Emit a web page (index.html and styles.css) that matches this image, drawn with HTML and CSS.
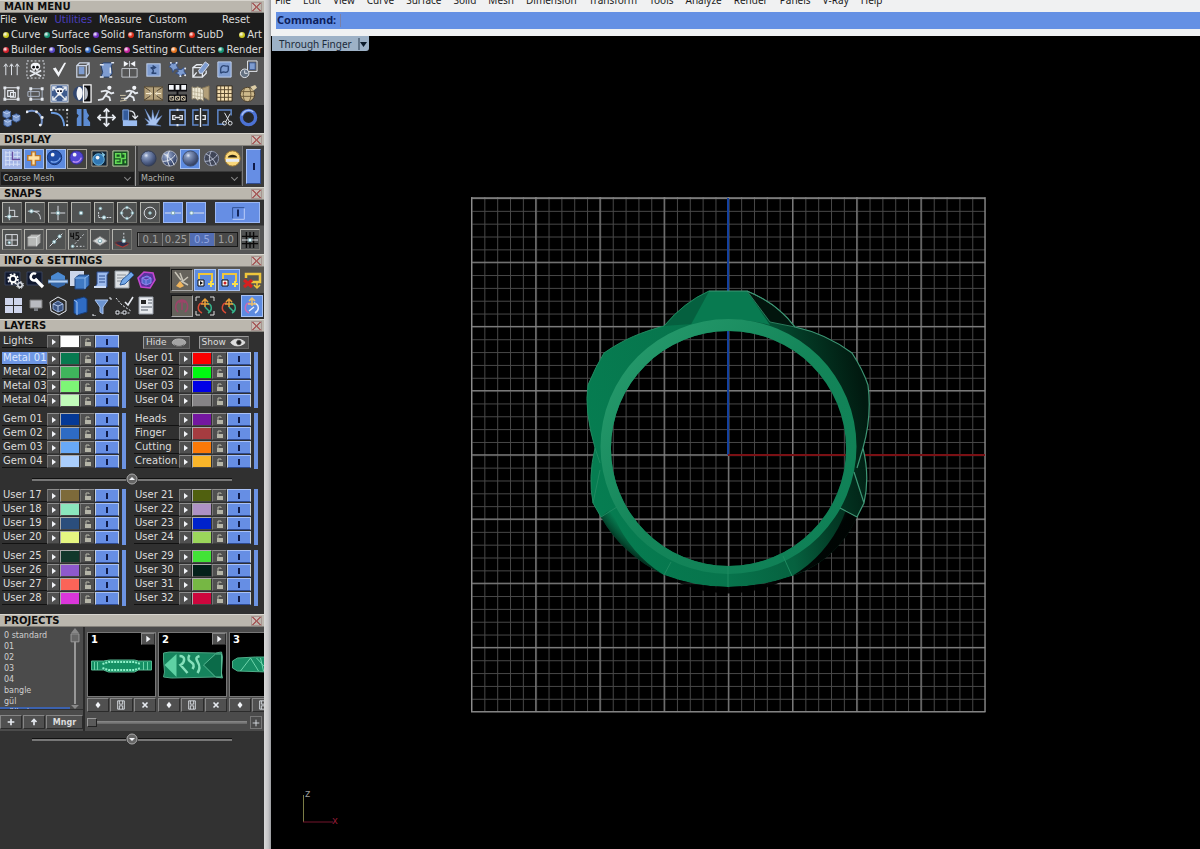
FILE: index.html
```html
<!DOCTYPE html>
<html lang="en">
<head>
<meta charset="utf-8">
<title>Through Finger</title>
<link rel="stylesheet" href="styles.css">
</head>
<body>
<div class="app">
<aside class="side">

  <section class="panel">
    <header class="bar"><h2>MAIN MENU</h2><button class="close" aria-label="Close main menu"></button></header>
    <nav class="menu"><a href="#">File</a><a href="#">View</a><a href="#" class="current">Utilities</a><a href="#">Measure</a><a href="#">Custom</a><a href="#" class="end">Reset</a></nav>
    <nav class="tabs"><a href="#" class="yellow">Curve</a><a href="#" class="teal">Surface</a><a href="#" class="violet">Solid</a><a href="#" class="red">Transform</a><a href="#" class="red">SubD</a><a href="#" class="yellow end">Art</a></nav>
    <nav class="tabs spread"><a href="#" class="crimson">Builder</a><a href="#" class="indigo">Tools</a><a href="#" class="blue">Gems</a><a href="#" class="magenta">Setting</a><a href="#" class="orange">Cutters</a><a href="#" class="teal">Render</a></nav>
    <div class="tools">
      <button aria-label="Extrude"><svg viewBox="0 0 20 20"><path d="M4 16V5M10 16V5M16 16V5M2 7l2-3 2 3M8 7l2-3 2 3M14 7l2-3 2 3"/></svg></button>
      <button aria-label="Delete marked"><svg viewBox="0 0 20 20"><rect x="1" y="1" width="18" height="18" stroke-dasharray="2 2"/><path d="M4 11l12 6M16 11L4 17" stroke-width="1.800"/><path class="fw n" d="M10 3c-4 0-5 2-5 4s1 2 2 3v2h6v-2c1-1 2-1 2-3s-1-4-5-4z"/><circle class="fk n" cx="8" cy="7.500" r="1.400"/><circle class="fk n" cx="12" cy="7.500" r="1.400"/><path d="M10 10v2M8.500 11v1M11.500 11v1" stroke="#333"/></svg></button>
      <button aria-label="Accept"><svg viewBox="0 0 20 20"><path class="fw n" d="M3 9l3-1 3 5 6-10h2L9 18z"/></svg></button>
      <button aria-label="Box"><svg viewBox="0 0 20 20"><path class="fb n" d="M6 7h6v8H6z"/><path d="M4 6h10v12H4zM4 6l3-3h10v11l-3 4M14 6l3-3" stroke-width="1.300" stroke="#cdd6e6"/></svg></button>
      <button aria-label="Cage edit"><svg viewBox="0 0 20 20"><path class="fb" d="M4 5l3-2h10l-2 3 1 8-3 4H4l2-5z" stroke="#243c66"/><path d="M3 5h4M3 18h4M13 18h3M15 3h3M14 8v6" stroke-width="1.600"/></svg></button>
      <button aria-label="Align"><svg viewBox="0 0 20 20"><path d="M2 9h16v9H2zM10 9v9M10 1v6" stroke="#c3c6cc"/><path class="fw n" d="M4 1l5 3-5 3zM16 1l-5 3 5 3z"/></svg></button>
      <button aria-label="Rotate piece"><svg viewBox="0 0 20 20"><rect class="fb" x="3" y="4" width="14" height="13" stroke="#c2d2ee"/><path d="M13 14H8c3-1 2-5-1-6h4M9 6l3 2-3 2" stroke="#2c4675" stroke-width="1.500"/></svg></button>
      <button aria-label="Explode"><svg viewBox="0 0 20 20"><path class="fb" stroke="#354e83" d="M2 3l4 1 4-2-1 4 2 3-4 1-2 3-1-4-3-2 2-2zM10 10l4 0 3-2 0 4 2 3-4 0-2 3-2-3-3-1 3-2z"/><path d="M3 3h.1M9 3h.1M18 9h.1M13 17h.1M18 16h.1" stroke-width="2" stroke-linecap="round"/></svg></button>
      <button aria-label="Edit box"><svg viewBox="0 0 20 20"><path d="M2 8h10v10H2zM2 8l4-3h6M12 18l4-4v-3M2 18l4-5" stroke-width="1.400"/><path class="fb" d="M8 11l1 3 3 0 7-9-4-3z" stroke="#d5def0"/></svg></button>
      <button aria-label="Sweep"><svg viewBox="0 0 20 20"><path class="fb" d="M3 2h14v16H3z" stroke="#c2d2ee"/><path d="M6 9c2-6 5-1 8-3M6 14c3-4 6 2 8-3M6 9v5M14 6v5" stroke="#2c4675" stroke-width="1.400"/></svg></button>
      <button aria-label="History"><svg viewBox="0 0 20 20"><path d="M9 1h10v11H9z"/><path class="fb" d="M11 3h6v7h-6z" stroke="#3f5c95"/><circle cx="6" cy="14" r="4.500" fill="#637080"/><path d="M6 11v3h3"/></svg></button>

      <button aria-label="Group"><svg viewBox="0 0 20 20"><path d="M3 4h14v12H3zM6 7h6v6H6zM9 9h5v5H9z" stroke-width="1.200"/><path stroke-width="3" d="M1.500 4h3M15.500 4h3M1.500 16h3M15.500 16h3"/></svg></button>
      <button aria-label="Ungroup"><svg viewBox="0 0 20 20"><path d="M5 5h12v11H5zM2 8h12v5H2z" stroke="#adb7c8"/><path stroke-width="3" d="M3.500 5h3M15.500 5h3M3.500 16h3M15.500 16h3"/></svg></button>
      <button aria-label="Purge"><svg viewBox="0 0 20 20"><rect x="1" y="1" width="18" height="18" fill="#3e5b8e"/><path d="M3 3l14 14M17 3L3 17M3 7V3h4M13 3h4v4M3 13v4h4M13 17h4v-4" stroke-width="1.500"/><path class="fw n" d="M10 4c-3 0-4 1-4 3s1 2 2 3v2h4v-2c1-1 2-1 2-3s-1-3-4-3z"/><path d="M7.500 7.500h2M10.500 7.500h2" stroke="#223" stroke-width="2"/></svg></button>
      <button aria-label="Shade"><svg viewBox="0 0 20 20"><circle fill="#30456e" class="n" cx="8" cy="10" r="8"/><path class="fw n" d="M6 3c-3 4-3 10 0 14 5 0 6-14 0-14z"/><path class="fk" d="M11 1h8v18h-8z" stroke="#fff" stroke-width="1.300"/><path fill="#b7bdc8" class="n" d="M12 3c5 1 5 13 0 14z"/></svg></button>
      <button aria-label="Run"><svg viewBox="0 0 20 20"><circle class="fw n" cx="13" cy="4" r="2.200"/><path d="M12 7l-3 5 4 2 1 4M9 12l-3 4-5 1M4 8l5-1 3 1 3 2 3-1" stroke-width="2"/></svg></button>
      <button aria-label="Run fast"><svg viewBox="0 0 20 20"><circle class="fw n" cx="15" cy="4" r="2.200"/><path d="M13 7l-3 5 4 2 1 4M10 12l-3 3-3 1M6 8l4-1 4 1 2 2 3-1" stroke-width="2"/><path d="M0 12h6M0 18l7-1M1 15h4" stroke="#d3c8ac"/></svg></button>
      <button aria-label="Squeeze"><svg viewBox="0 0 20 20"><path class="ft" d="M0 3h20v14H0z" stroke="#5a4c37"/><path d="M0 3l6 4v6l-6 4M20 3l-6 4v6l6 4M10 3v14" stroke="#4c402f"/><path d="M2 10h5M18 10h-5M5 8l3 2-3 2M15 8l-3 2 3 2" stroke="#fff4d8"/></svg></button>
      <button aria-label="Array"><svg viewBox="0 0 20 20"><path class="fk n" d="M0 0h20v8H0zM0 11h20v8H0zM9 8h2v3H9z"/><path class="fw n" d="M1 1h5v5H1zM8 1h4v5H8zM14 1h5v5h-5z"/><path d="M2 13h4v4H2zM8 13h4v4H8zM14 13h4v4h-4zM2 13l4 4M8 13l4 4M14 13l4 4" stroke="#d9cdb2"/></svg></button>
      <button aria-label="Unfold"><svg viewBox="0 0 20 20"><path class="ft" d="M10 5l9-3v15l-9-5z" stroke="#8a7a5a"/><path d="M1 3l3 1 3-1 3 1 3 2v12l-3-2-3 1-3-2-3 1z" fill="#ece6d2" stroke="#8b8168"/><path d="M4 4v12M7 3v13M10 4v12M1 8l12 2M1 12l12 2" stroke="#a89e82" stroke-width=".6"/></svg></button>
      <button aria-label="Tile"><svg viewBox="0 0 20 20"><path d="M2 2h16v16H2z" fill="#f2dcae" stroke="#2c251a"/><path d="M6 2v16M10 2v16M14 2v16M2 6h16M2 10h16M2 14h16" stroke="#54452c"/></svg></button>
      <button aria-label="Wrap"><svg viewBox="0 0 20 20"><circle fill="#cdb98b" cx="9" cy="11" r="7.500" stroke="#4a3e2b"/><path d="M2 8h14M2 13h14M6 4c-2 4-2 10 0 14M11 4c2 4 2 10 0 14" stroke="#6d5c3c"/><path class="fw n" d="M12 3l5-2 2 3-4 3z" style="fill:#dccda6"/></svg></button>
    </div>
    <div class="tools dark">
      <button aria-label="Boxes"><svg viewBox="0 0 20 20"><path class="fb" stroke="#35558f" d="M1 4l4-2 4 2v5l-4 2-4-2zM2 13l4-2 4 2v5l-4 2-4-2zM11 8l4-2 4 2v5l-4 2-4-2z"/><path stroke="#bdd0f2" d="M1 4l4 2 4-2M2 13l4 2 4-2M11 8l4 2 4-2"/></svg></button>
      <button aria-label="Arc"><svg viewBox="0 0 20 20"><path d="M1 4c10-4 18 4 15 14" stroke="#7492c8" stroke-width="2"/><path d="M1 4h.1M11 4h.1M17 10h.1M15 18h.1" stroke-width="3" stroke-linecap="round"/></svg></button>
      <button aria-label="Conic"><svg viewBox="0 0 20 20"><path d="M1 2h17v17" stroke-dasharray="2 2"/><path d="M1 5c9 0 13 4 14 14" stroke="#6b9ce0" stroke-width="2"/><path d="M18 2h.1M18 18h.1M1 2h.1" stroke-width="2.500" stroke-linecap="round"/></svg></button>
      <button aria-label="Mirror"><svg viewBox="0 0 20 20"><path class="n" d="M9 1H4v5l2 2-2 3v8h5zM11 1h3l1 4 2 3-2 3 3 4v4h-7z" fill="#5c8bd2"/></svg></button>
      <button aria-label="Move"><svg viewBox="0 0 20 20"><path d="M10 1v18M1 10h18M7 4l3-3 3 3M7 16l3 3 3-3M4 7l-3 3 3 3M16 7l3 3-3 3" stroke-width="1.800"/></svg></button>
      <button aria-label="Rotate"><svg viewBox="0 0 20 20"><path d="M3 2h6v11H3z" fill="#335b9c" stroke="#7fa4e2"/><path fill="#9bbcf0" class="n" d="M3 13h15v6H3z"/><path d="M10 3c4 0 6 2 6 7M13 8l3 3 3-3" stroke-width="1.400"/></svg></button>
      <button aria-label="Burst"><svg viewBox="0 0 20 20"><path d="M1 1l7 11L9 2l2 9 5-9-3 10 6-4-6 9 5 2-16-1 3-2-4-5 5 3z" fill="#a8c3f0" stroke="#5a7fbe" stroke-width=".5"/></svg></button>
      <button aria-label="Join"><svg viewBox="0 0 20 20"><path d="M2 2h16v16H2z" stroke="#81a7e6" stroke-width="1.600"/><path d="M8 8H5v4h3M12 8h3v4h-3M7 10h6" stroke-width="1.400"/><path d="M9 2h2M9 18h2" stroke-width="2.500"/></svg></button>
      <button aria-label="Split"><svg viewBox="0 0 20 20"><path d="M8 2H2v16h6M12 2h6v16h-6" stroke="#5f87c9" stroke-width="1.600"/><path d="M10 0v20M8 8H5v4h3M12 8h3v4h-3" stroke-width="1.400"/></svg></button>
      <button aria-label="Trim"><svg viewBox="0 0 20 20"><path d="M17 8V2H3v15h7" stroke="#5f87c9" stroke-width="1.600"/><path d="M10 5l5 9M16 6l-5 9"/><circle cx="10" cy="16" r="2"/><circle cx="16" cy="16" r="2"/></svg></button>
      <button aria-label="Ring"><svg viewBox="0 0 20 20"><circle cx="10" cy="10" r="7.500" stroke="#4c72d4" stroke-width="3.500"/><path d="M3 8a7.500 7.500 0 0 1 12-4" stroke="#a7c0f5" stroke-width="1.500"/></svg></button>
    </div>
  </section>

  <section class="panel">
    <header class="bar"><h2>DISPLAY</h2><button class="close" aria-label="Close display"></button></header>
    <div class="display">
      <div class="view-box">
        <div class="icons">
          <button class="lit pale" aria-label="Grid"><svg viewBox="0 0 20 20"><path d="M3 2v16M7 2v16M11 2v16M15 2v16M2 4h16M2 8h16M2 12h16M2 16h16" stroke="#d6e0f7"/><path d="M10 3v8h8" stroke="#654a9d" stroke-width="1.500"/></svg></button>
          <button class="lit" aria-label="Axes"><svg viewBox="0 0 20 20"><path d="M8 3h4v4h5v5h-5v5H8v-5H4V7h4z" fill="#ffe3a6" stroke="#b8742b" stroke-width="1.500"/></svg></button>
          <button class="lit" aria-label="Shaded sphere"><svg viewBox="0 0 20 20"><circle cx="9" cy="9" r="7.500" fill="#204da6" stroke="#142e6a"/><circle class="fw n" cx="7" cy="6" r="2"/><path d="M5 13c4 2 9 0 10-4" stroke="#78a4ec" stroke-width="1.500"/></svg></button>
          <button class="boxed" aria-label="Rendered sphere"><svg viewBox="0 0 20 20"><circle cx="9" cy="9" r="7" fill="#5147d2" stroke="#382d91"/><circle class="fw n" cx="7" cy="6" r="2"/><path d="M5 13c4 2 8 0 9-4" stroke="#bd8cf1" stroke-width="1.500"/></svg></button>
          <button aria-label="Environment"><svg viewBox="0 0 20 20"><path d="M2 2h16v16H2z" fill="#102437" stroke="#afa698"/><circle cx="9" cy="11" r="6" fill="#3178b4" stroke="#71bde4"/><circle class="fw n" cx="8" cy="9" r="2"/><path d="M12 3l4 3-2 3z" fill="#8acbe8" class="n"/></svg></button>
          <button aria-label="Circuit"><svg viewBox="0 0 20 20"><path d="M2 2h16v16H2z" fill="#174f22" stroke="#c5d6b0"/><path d="M5 5h5v4H5zM12 5h3v5h-4v5H5v-3h4M15 12v3" stroke="#64db55" stroke-width="1.700"/></svg></button>
        </div>
        <label class="pick"><select aria-label="Mesh density"><option>Coarse Mesh</option><option>Fine Mesh</option></select></label>
      </div>
      <div class="mode-box">
        <div class="icons">
          <button aria-label="Matte"><svg viewBox="0 0 20 20"><circle cx="10" cy="10" r="8" fill="url(#ball)" stroke="#333c53"/></svg></button>
          <button aria-label="Wire front"><svg viewBox="0 0 20 20"><circle cx="10" cy="10" r="8" fill="url(#ball)" stroke="#aab0c0"/><path d="M4 5c4 2 9 6 11 12M10 2c-3 5-3 10 0 16M3 13c5 0 10-2 13-7"/></svg></button>
          <button class="lit" aria-label="Gloss"><svg viewBox="0 0 20 20"><circle cx="10" cy="10" r="8" fill="url(#ball)" stroke="#3d4c6a"/></svg></button>
          <button aria-label="Wire"><svg viewBox="0 0 20 20"><circle cx="10" cy="10" r="7.500" fill="#3f4557" stroke="#8b93ac"/><path d="M4 5c4 2 9 6 11 12M10 2c-3 5-3 10 0 16M3 13c5 0 10-2 13-7" stroke="#bcc2d4"/></svg></button>
          <button aria-label="Sun"><svg viewBox="0 0 20 20"><circle cx="10" cy="10" r="8" fill="#f9d77a" stroke="#a88134"/><path d="M5 9h10c-1-4-9-4-10 0z" fill="#2c2411" class="n"/><path d="M3 12h14" stroke-width="3"/></svg></button>
        </div>
        <label class="pick"><select aria-label="Render mode"><option>Machine</option><option>Quality</option></select></label>
      </div>
      <button class="switch tall" aria-label="Display on"></button>
    </div>
  </section>

  <section class="panel">
    <header class="bar"><h2>SNAPS</h2><button class="close" aria-label="Close snaps"></button></header>
    <div class="snaps">
      <div class="snap-row">
        <button class="cell" aria-label="End"><svg viewBox="0 0 20 20"><path d="M7 3v15M2 14h15M7 7h6v7"/><circle class="pt" cx="7" cy="14" r="2"/></svg></button>
        <button class="cell" aria-label="Near"><svg viewBox="0 0 20 20"><path d="M2 8h13M7 8c7 1 9 4 9 9"/><circle class="pt" cx="6" cy="8" r="2"/></svg></button>
        <button class="cell" aria-label="Intersection"><svg viewBox="0 0 20 20"><path d="M10 2v16M2 10h16"/><circle class="pt" cx="10" cy="10" r="2"/></svg></button>
        <button class="cell" aria-label="Point"><svg viewBox="0 0 20 20"><circle class="pt" cx="10" cy="10" r="2"/></svg></button>
        <button class="cell" aria-label="Perpendicular"><svg viewBox="0 0 20 20"><path d="M4 9v6h14" stroke-dasharray="2 1"/><circle class="pt" cx="6" cy="5" r="1.500"/><circle class="pt" cx="10" cy="15" r="2"/></svg></button>
        <button class="cell" aria-label="Quadrant"><svg viewBox="0 0 20 20"><circle cx="10" cy="10" r="6"/><circle class="pt" cx="10" cy="4" r="1.500"/><circle class="pt" cx="10" cy="16" r="1.500"/><circle class="pt" cx="4" cy="10" r="1.500"/><circle class="pt" cx="16" cy="10" r="1.500"/></svg></button>
        <button class="cell" aria-label="Centre"><svg viewBox="0 0 20 20"><circle cx="10" cy="10" r="6.500"/><circle class="pt" cx="10" cy="10" r="1.500"/></svg></button>
        <button class="cell on" aria-label="Midpoint"><svg viewBox="0 0 20 20"><path d="M1 10h18"/><circle class="pt" cx="10" cy="10" r="2"/></svg></button>
        <button class="cell on" aria-label="Knot"><svg viewBox="0 0 20 20"><path d="M4 10h15"/><circle class="pt" cx="5" cy="10" r="2"/></svg></button>
        <button class="cell on wide" aria-label="Snaps on"><svg viewBox="0 0 20 20"><path d="M4 16V4h13" stroke="#2d4d91"/><path d="M17 5v12H4" stroke="#c5d4fb"/><path d="M10 6v8" stroke="#0c1a4c" stroke-width="2"/></svg></button>
      </div>
      <div class="snap-row second">
        <button class="cell" aria-label="Grid snap"><svg viewBox="0 0 20 20"><path d="M3 4h13v12H3zM10 4v12M3 10h13"/><circle class="pt" cx="7" cy="13" r="1.500"/></svg></button>
        <button class="cell" aria-label="Box snap"><svg viewBox="0 0 20 20"><path fill="#b6b8b6" stroke="#777" d="M3 7l4-3h10v9l-4 4H3z"/><path d="M3 7h10v10M13 7l4-3" stroke="#e2e4e4"/></svg></button>
        <button class="cell" aria-label="Line snap"><svg viewBox="0 0 20 20"><path d="M3 17L17 3"/><circle class="pt" cx="8" cy="12" r="1.800"/><circle class="pt" cx="14" cy="6" r="1.800"/></svg></button>
        <button class="cell" aria-label="Angle snap"><svg viewBox="0 0 20 20"><path d="M4 17L17 3M4 17h13" stroke-dasharray="2 2"/><path d="M2 2v4h3M5 2v7M11 2H8v3h2l1 2-1 2H7" stroke="#111" stroke-width="1.200"/><circle class="pt" cx="4" cy="17" r="1.500"/></svg></button>
        <button class="cell" aria-label="Plane snap"><svg viewBox="0 0 20 20"><path fill="#d5d8d8" stroke="#888" d="M2 11l8-5 8 5-8 5z"/><circle class="pt" cx="10" cy="11" r="2"/></svg></button>
        <button class="cell" aria-label="Surface snap"><svg viewBox="0 0 20 20"><path fill="#2d2f4b" stroke="#6b3434" d="M2 13c5-2 9-2 16 1l-8 4z"/><path d="M12 2v10" stroke-dasharray="2 2"/><circle class="pt" cx="12" cy="11" r="2"/><path d="M3 15l8 3 6-3" stroke="#b93c38"/></svg></button>
        <div class="steps"><button>0.1</button><button>0.25</button><button class="on">0.5</button><button>1.0</button></div>
        <button class="cell" aria-label="Grid step"><svg viewBox="0 0 20 20"><path d="M6 1v18M10 1v18M14 1v18M1 6h18M1 14h18" stroke="#0a0a0a" stroke-width="1.500"/><path d="M1 10h18"/><circle class="pt" cx="10" cy="10" r="2"/></svg></button>
      </div>
    </div>
  </section>

  <section class="panel">
    <header class="bar"><h2>INFO &amp; SETTINGS</h2><button class="close" aria-label="Close info and settings"></button></header>
    <div class="info">
      <div class="info-left">
        <button aria-label="Settings"><svg viewBox="0 0 20 20"><path fill="#10182e" stroke="#39435c" d="M1 2h15v13H1z"/><circle cx="9" cy="9" r="3.200" stroke="#fff" stroke-width="2"/><circle cx="9" cy="9" r="5" stroke="#fff" stroke-width="1.500" stroke-dasharray="2 1.920"/><circle cx="16" cy="15" r="2.200" stroke-width="1.500"/><circle cx="16" cy="15" r="3.500" stroke-dasharray="1.400 1.350"/></svg></button>
        <button aria-label="Preferences"><svg viewBox="0 0 20 20"><path fill="#10182e" stroke="#39435c" d="M1 2h15v13H1z"/><path d="M9 9l8 8" stroke="#fff" stroke-width="3.200"/><path d="M10 4a3.500 3.500 0 1 0 1 5" stroke="#fff" stroke-width="2.500"/></svg></button>
        <button aria-label="Weight"><svg viewBox="0 0 20 20"><path class="n" d="M3 6l7-4 7 4v4H3z" fill="#4b8ad2"/><path fill="#b8d4f5" stroke="#4470a8" d="M0 10h20v3H0z"/><path class="n" fill="#3567a8" d="M3 13h14v2l-7 3-7-3z"/></svg></button>
        <button aria-label="Report"><svg viewBox="0 0 20 20"><path class="n" d="M0 1h14v15H0z" fill="#ccd6ea"/><path d="M5 8l4-3h10v10l-4 4H5z" fill="#3f79c3" stroke="#1f4580"/><path d="M5 8h10v11M15 8l4-3" stroke="#8bb8ee"/></svg></button>
        <button aria-label="Notes"><svg viewBox="0 0 20 20"><path d="M5 2h12l-2 3v12H3l2-3z" fill="#9dbbee" stroke="#2c4c8f"/><path d="M7 6h6M7 9h6M7 12h6" stroke="#2c4c8f"/><path d="M2 17h12" stroke="#d0ddf5" stroke-width="2"/></svg></button>
        <button aria-label="Write"><svg viewBox="0 0 20 20"><path d="M1 1h14v17H1z" fill="#dce0e4" stroke="#8f979f"/><path d="M3 5h9M3 8h7M3 11h5" stroke="#8a9096"/><path d="M6 15l2-5 9-8 3 3-9 9z" fill="#73a8e8" stroke="#2d5a98"/></svg></button>
        <button aria-label="Gem info"><svg viewBox="0 0 20 20"><path d="M2 8l6-6 9 1 2 7-5 8-9-1z" fill="#5932a0" stroke="#c348ce" stroke-width="1.600"/><path d="M6 8l5-2 4 2v5l-5 2-4-2zM6 8l4 2 5-2M10 10v5" fill="#5268c9" stroke="#9486ee"/></svg></button>
        <button aria-label="Viewports"><svg viewBox="0 0 20 20"><path fill="#ced5ec" class="n" d="M1 2h8v7H1zM10 2h8v7h-8zM1 10h8v7H1zM10 10h8v7h-8z"/></svg></button>
        <button aria-label="Monitor"><svg viewBox="0 0 20 20"><path fill="#b9bbc0" stroke="#777" d="M4 4h12v8H4z"/><path class="n" fill="#787b80" d="M8 12h4v3H8z"/></svg></button>
        <button aria-label="Bounding box"><svg viewBox="0 0 20 20"><path d="M2 6l8-5 8 4v10l-7 4-8-4z"/><path d="M5 8l5-3 5 3v6l-5 2-5-3z" fill="#3b5482" stroke="#91a9d4"/><path d="M5 8l5 2 5-2M10 10v6" stroke="#b5c8e8"/></svg></button>
        <button aria-label="Library"><svg viewBox="0 0 20 20"><path d="M4 4l10-3 3 2v13L7 19l-3-2z" fill="#2f6cc4" stroke="#173d79"/><path d="M4 4l3 2v13" stroke="#a0c4f5"/></svg></button>
        <button aria-label="Filter"><svg viewBox="0 0 20 20"><path d="M3 4h13l-5 7v7l-3-2v-5z" fill="#6c94d0" stroke="#a9c2ea"/><path d="M17 2h2v2M1 18v2h3"/></svg></button>
        <button aria-label="Check curve"><svg viewBox="0 0 20 20"><path d="M2 2l6 7 9 6M3 17h14" stroke-dasharray="2 1.500"/><path d="M11 6l3 3 5-8" stroke-width="1.600"/><path class="fk" d="M2 15h3v3H2zM9 15h3v3H9z"/></svg></button>
        <button aria-label="Page"><svg viewBox="0 0 20 20"><path d="M3 1h14v17H3z" fill="#e7eaee" stroke="#9aa0aa"/><path d="M5 4h5v4H5z" fill="#222" stroke="none"/><path d="M12 4h4M12 7h4M5 11h11M5 14h7" stroke="#555c68"/></svg></button>
      </div>
      <div class="info-right">
        <button class="sunk" aria-label="Clean"><svg viewBox="0 0 20 20"><path d="M3 2l6 8M8 3l3 8 5-4M9 11l7 4" stroke="#c9c5b8" stroke-width="1.500"/><path fill="#f0b45a" class="n" d="M4 16l4-5 4 5-4 2z"/></svg></button>
        <button class="lit" aria-label="Add frame"><svg viewBox="0 0 20 20"><path d="M4 9V4h13v8" stroke="#efc63c" stroke-width="2"/><path d="M13 14h6M16 11v6" stroke="#f8e04e" stroke-width="2"/><path fill="#fff" stroke="#111" d="M3 10h6v6H3z"/><path class="fk n" d="M5 11l3 2-3 2z"/></svg></button>
        <button class="lit" aria-label="Add key"><svg viewBox="0 0 20 20"><path d="M4 9V4h13v8" stroke="#efc63c" stroke-width="2"/><path d="M13 14h6M16 11v6" stroke="#f8e04e" stroke-width="2"/><path fill="#fff" stroke="#111" d="M3 10h6v6H3z"/><circle cx="6" cy="13" r="1.500" fill="#c22" stroke="none"/></svg></button>
        <button aria-label="Remove frame"><svg viewBox="0 0 20 20"><path d="M4 8V4h14v8H9" stroke="#efc63c" stroke-width="2.500"/><path d="M15 17v-6M12 15l3 3 3-3" stroke="#efc63c" stroke-width="1.500"/><path d="M2 10l8 7M10 10l-8 7" stroke="#d52020" stroke-width="3"/></svg></button>
        <button class="sunk" aria-label="Gumball off"><svg viewBox="0 0 20 20"><path d="M6 16c-5-5-1-12 4-12s8 7 3 12M10 14V5M7 7l3-3 3 3" stroke="#9c4468" stroke-width="1.600"/></svg></button>
        <button aria-label="Gumball align"><svg viewBox="0 0 20 20"><path d="M1 5V1h4M15 1h4v4M19 15v4h-4M5 19H1v-4" stroke="#ddd"/><path d="M7 17c-6-3-4-10 1-10" stroke="#d94a35" stroke-width="1.500"/><path d="M12 7c5 1 6 7 1 10M10 11l5 5" stroke="#35b48b" stroke-width="1.500"/><path d="M10 11V3M7 6l3-3 3 3M6 8h8" stroke="#e9a13a" stroke-width="1.500"/></svg></button>
        <button aria-label="Gumball world"><svg viewBox="0 0 20 20"><path d="M7 17c-6-3-4-10 1-10" stroke="#d94a35" stroke-width="1.500"/><path d="M12 7c5 1 6 7 1 10M10 11l5 5" stroke="#35b48b" stroke-width="1.500"/><path d="M10 11V3M7 6l3-3 3 3M6 8h8" stroke="#e9a13a" stroke-width="1.500"/></svg></button>
        <button class="lit" aria-label="Gumball on"><svg viewBox="0 0 20 20"><path d="M7 17c-6-3-4-10 1-10" stroke="#c86bb5" stroke-width="1.500"/><path d="M12 7c5 1 6 7 1 10M7 15l5-4" stroke="#e5edff" stroke-width="1.500"/><path d="M10 10V2M7 5l3-3 3 3M6 8h8" stroke="#ecc06a" stroke-width="1.500"/></svg></button>
      </div>
    </div>
  </section>

  <section class="panel">
    <header class="bar"><h2>LAYERS</h2><button class="close" aria-label="Close layers"></button></header>
    <div class="layers">
      <div class="lights">
        <div class="group" data-layers="Lights:#fdfdfd"></div>
        <button class="eye">Hide <svg viewBox="0 0 18 10"><ellipse cx="9" cy="5" rx="7.500" ry="4" fill="#a4a4a4" stroke="#bbb"/><path d="M3 7c3 3 9 3 12 0" stroke="#555"/></svg></button>
        <button class="eye">Show <svg viewBox="0 0 18 10"><path d="M1 5c3-5 12-5 16 0-4 5-13 5-16 0z" fill="#ddd" stroke="#eee"/><circle cx="10" cy="5" r="2.500" fill="#222" stroke="#444"/></svg></button>
      </div>
      <div class="groups">
        <div class="group" data-active="Metal 01" data-layers="Metal 01:#087a50,Metal 02:#3fb55c,Metal 03:#7df576,Metal 04:#c1fbb9"></div>
        <div class="group" data-layers="User 01:#fb0000,User 02:#00f911,User 03:#0000e6,User 04:#858386"></div>
        <div class="group" data-layers="Gem 01:#053996,Gem 02:#2e6bc4,Gem 03:#68a9f6,Gem 04:#a9cdfb"></div>
        <div class="group" data-layers="Heads:#7417a0,Finger:#a53c40,Cutting:#fb7908,Creation:#f9b52a"></div>
      </div>
      <div class="fold"><button aria-label="Collapse layers"><svg viewBox="0 0 12 12"><circle cx="6" cy="6" r="5" fill="#666" stroke="#aaa"/><path class="fw n" d="M3 7l3-3 3 3z"/></svg></button></div>
      <div class="groups">
        <div class="group" data-layers="User 17:#7d6a3a,User 18:#8be6bd,User 19:#2b4e7c,User 20:#e5f581"></div>
        <div class="group" data-layers="User 21:#50600f,User 22:#ad91c4,User 23:#0022cc,User 24:#9bd65b"></div>
        <div class="group" data-layers="User 25:#12382b,User 26:#8e59cc,User 27:#fb6458,User 28:#da36da"></div>
        <div class="group" data-layers="User 29:#42e337,User 30:#04211a,User 31:#76b744,User 32:#cc063d"></div>
      </div>
    </div>
  </section>

  <section class="panel">
    <header class="bar"><h2>PROJECTS</h2><button class="close" aria-label="Close projects"></button></header>
    <div class="projects">
      <div class="folders">
        <div class="folder-list">
          <ul><li>0 standard</li><li>01</li><li>02</li><li>03</li><li>04</li><li>bangle</li><li>gül</li><li class="picked">güllerim</li></ul>
          <svg class="scroll" viewBox="0 0 10 84"><path d="M5 8v70" stroke="#999" stroke-width="2"/><path d="M1 6l4-5 4 5zM1 79l4 4 4-4z" fill="#888" stroke="none"/><path d="M1 7h8v8H1z" fill="#666" stroke="#999"/></svg>
        </div>
        <div class="folder-keys"><button aria-label="Add folder"><svg viewBox="0 0 12 12"><path d="M6 2v8M2 6h8" stroke-width="2"/></svg></button><button aria-label="Up"><svg viewBox="0 0 12 12"><path d="M6 10V3M3 6l3-3 3 3" stroke-width="2"/></svg></button><button class="manager">Mngr</button></div>
      </div>
      <div class="gallery">
        <div class="cards">
          <article class="card">
            <div class="thumb"><b>1</b><button class="play" aria-label="Open 1"><svg viewBox="0 0 12 12"><path class="fw n" d="M4 2l5 4-5 4z"/></svg></button>
              <svg class="pic" viewBox="0 0 66 34"><path d="M3 13h12l6-1h25l4 1h13v9H50l-4 2H20l-5-2H3z" fill="#159064" stroke="#56b690" stroke-width="1"/><path d="M14 16l6-2h26l6 2M14 20l6 2h26l6-2" stroke="#8ff0c9" stroke-width="2" stroke-dasharray="2 1"/><path d="M6 14v8M9 14v8M55 14v8M59 14v8" stroke="#69d2a6"/></svg></div>
            <div class="card-keys"><button aria-label="Add"><svg viewBox="0 0 12 12"><path class="fw n" d="M6 2l3 4-3 4-3-4z"/></svg></button><button aria-label="Save"><svg viewBox="0 0 12 12"><path d="M2 1h8v10H2zM4 1v4h4V1M4 11V7h4v4"/></svg></button><button aria-label="Remove"><svg viewBox="0 0 12 12"><path d="M3 3l6 6M9 3L3 9" stroke-width="2"/></svg></button></div>
          </article>
          <article class="card">
            <div class="thumb"><b>2</b><button class="play" aria-label="Open 2"><svg viewBox="0 0 12 12"><path class="fw n" d="M4 2l5 4-5 4z"/></svg></button>
              <svg class="pic" viewBox="0 0 66 34"><path d="M4 5l6-1 46 1 6-1 1 5-1 16 1 5-7-1-44 1-8-1 1-5-1-12z" fill="#16845d" stroke="#4ba583"/><path d="M5 17L17 6v23z" fill="#5ed2a4" stroke="none"/><path d="M44 17L56 6h6v23h-6z" fill="#0b6b49" stroke="#58b994"/><path d="M20 8c7 0 5 7 1 9l7 8M30 7c-5 8 8 6 3 14M40 8c-9 3 5 7-2 17" stroke="#86e0bb" stroke-width="2.500"/></svg></div>
            <div class="card-keys"><button aria-label="Add"><svg viewBox="0 0 12 12"><path class="fw n" d="M6 2l3 4-3 4-3-4z"/></svg></button><button aria-label="Save"><svg viewBox="0 0 12 12"><path d="M2 1h8v10H2zM4 1v4h4V1M4 11V7h4v4"/></svg></button><button aria-label="Remove"><svg viewBox="0 0 12 12"><path d="M3 3l6 6M9 3L3 9" stroke-width="2"/></svg></button></div>
          </article>
          <article class="card">
            <div class="thumb"><b>3</b>
              <svg class="pic" viewBox="0 0 66 34"><path d="M2 13l5-3 18-1 16 0 22 2v12l-26 1-30-1-5-3z" fill="#178d64" stroke="#4fae89"/><path d="M10 23L20 10l8 13M26 10l12 13M30 10l3 13" stroke="#6ed3ab"/></svg></div>
            <div class="card-keys"><button aria-label="Add"><svg viewBox="0 0 12 12"><path class="fw n" d="M6 2l3 4-3 4-3-4z"/></svg></button><button aria-label="Save"><svg viewBox="0 0 12 12"><path d="M2 1h8v10H2zM4 1v4h4V1M4 11V7h4v4"/></svg></button><button aria-label="Remove"><svg viewBox="0 0 12 12"><path d="M3 3l6 6M9 3L3 9" stroke-width="2"/></svg></button></div>
          </article>
        </div>
        <div class="slide"><input type="range" aria-label="Gallery position" min="0" max="100" value="0"><button aria-label="More"><svg viewBox="0 0 12 12"><path d="M6 2v8M2 6h8"/></svg></button></div>
      </div>
    </div>
    <div class="fold low"><button aria-label="Expand projects"><svg viewBox="0 0 12 12"><circle cx="6" cy="6" r="5" fill="#666" stroke="#aaa"/><path class="fw n" d="M3 5l3 3 3-3z"/></svg></button></div>
  </section>
</aside>

<div class="splitter"></div>

<main class="work">
  <nav class="topmenu"><a href="#">File</a><a href="#">Edit</a><a href="#">View</a><a href="#">Curve</a><a href="#">Surface</a><a href="#">Solid</a><a href="#">Mesh</a><a href="#">Dimension</a><a href="#">Transform</a><a href="#">Tools</a><a href="#">Analyze</a><a href="#">Render</a><a href="#">Panels</a><a href="#">V-Ray</a><a href="#">Help</a></nav>
  <div class="command"><label for="cmd">Command:</label><input id="cmd" type="text" autocomplete="off"></div>
  <div class="viewport">
    <button class="viewname"><span>Through Finger</span><svg viewBox="0 0 10 14"><path d="M1 1v12" stroke="#26384c"/><path d="M2 5h7L5.500 10z" fill="#0b1a2a" stroke="none"/></svg></button>
    <svg class="scene" viewBox="271 36 929 813" preserveAspectRatio="xMinYMin slice">
      <defs>
        <radialGradient id="ball" cx=".35" cy=".3" r=".8"><stop offset="0" stop-color="#e3ebf8"/><stop offset=".2" stop-color="#8496bb"/><stop offset=".6" stop-color="#4f5f86"/><stop offset="1" stop-color="#27324e"/></radialGradient>
        <pattern id="minor" x="471.500" y="198" width="12.840" height="12.840" patternUnits="userSpaceOnUse"><path d="M0 .5h12.840M.5 0v12.840" stroke="#484848"/></pattern>
        <pattern id="major" x="471" y="197.500" width="64.200" height="64.200" patternUnits="userSpaceOnUse"><path d="M0 .7h64.200M.7 0v64.200" stroke="#828282" stroke-width="1.200"/></pattern>
        <linearGradient id="body" x1="588" y1="440" x2="862" y2="390" gradientUnits="userSpaceOnUse"><stop offset="0" stop-color="#067d51"/><stop offset=".4" stop-color="#07744c"/><stop offset=".65" stop-color="#06613f"/><stop offset=".8" stop-color="#033d27"/><stop offset="1" stop-color="#011a10"/></linearGradient>
        <radialGradient id="foot" cx="718" cy="440" r="150" gradientUnits="userSpaceOnUse"><stop offset=".86" stop-color="#000" stop-opacity="0"/><stop offset=".92" stop-color="#000" stop-opacity=".35"/><stop offset="1" stop-color="#000" stop-opacity=".92"/></radialGradient>
        <linearGradient id="band" x1="640" y1="330" x2="850" y2="520" gradientUnits="userSpaceOnUse"><stop offset="0" stop-color="#25996b"/><stop offset=".5" stop-color="#148559"/><stop offset="1" stop-color="#0f8056"/></linearGradient>
      </defs>
      <rect x="471" y="197" width="514.500" height="515" fill="url(#minor)"/>
      <rect x="471" y="197" width="514.500" height="515" fill="url(#major)"/>
      <rect x="471.500" y="198" width="513.500" height="514" fill="none" stroke="#8c8c8c"/>
      <path d="M728 198v257" stroke="#14419f" stroke-width="2"/>
      <path d="M728 455h257" stroke="#7a1014" stroke-width="2"/>
      <path fill="url(#body)" fill-rule="evenodd" d="M709 291H747C764 298 778 308 795 326C818 332 836 341 852 353Q863 370 868 385Q872 417 863 448Q870 477 864 503L857 517C844 546 820 567 792 576Q760 587 728 587Q696 587 664 575C636 561 614 541 601 517L593 503Q588 477 595 448Q584 410 588 385Q596 366 604 353C624 339 642 332 664 326Q684 302 709 291ZM728.500 331A117.500 117.500 0 1 0 728.500 566A117.500 117.500 0 1 0 728.500 331Z"/>
      <path fill="url(#foot)" d="M601 517C614 541 636 561 664 575Q696 587 728 587Q760 587 792 576C820 567 844 546 857 517L846 510A124 124 0 0 1 611 508Z"/>
      <path class="n" fill="#087a50" d="M709 291h38l23 34q-45-12-80 2z"/>
      <path class="n" fill="#05603f" d="M709 291q-27 14-45 35l27-2z"/>
      <path fill="#02150d" stroke="#2b7a5c" d="M747 291Q777 303 795 327L770 322z"/>
      <path fill="url(#band)" fill-rule="evenodd" d="M728.500 319A128 127.500 0 0 0 728.500 574A128 127.500 0 0 0 728.500 319ZM728.500 331A117.500 117.500 0 1 1 728.500 566A117.500 117.500 0 1 1 728.500 331Z"/>
      <g fill="none" stroke="#3e9675" stroke-width="1">
        <path d="M709 291h38Q777 303 795 327C818 332 836 341 852 353Q863 370 868 385Q872 417 863 448L857 468M863 448Q870 477 864 503L857 517L840 508M854 472l10 31" stroke-width="1.200"/>
        <path d="M664 326Q684 302 709 291M664 326C642 332 624 339 604 353Q596 366 588 385Q584 410 595 448Q588 477 593 503L601 517L617 507M600 470l-7 33M664 575l7-13M792 576l-9-20M728 566v21M595 448l5 15" stroke="#1f8a60"/>
      </g>
      <path d="M303.500 795v27" stroke="#7b7d46"/><path d="M303 822h30" stroke="#75152d"/>
      <text x="305" y="797" class="axis">z</text><text x="332" y="824" class="axis x">x</text>
    </svg>
  </div>
</main>
</div>
<script src="layers.js"></script>
</body>
</html>
```

FILE: styles.css
```css
* { box-sizing: border-box; }
body { margin: 0; background: #000; font-family: "DejaVu Sans", Verdana, sans-serif; font-size: 10px; color: #dcdcdc; }
button { margin: 0; padding: 0; border: 0; background: none; color: inherit; font: inherit; display: flex; align-items: center; justify-content: center; }
a { color: inherit; text-decoration: none; }
h2 { margin: 0; font-size: 10px; line-height: 12px; font-weight: bold; color: #0d0d0d; }
svg { fill: none; stroke: #e6eaf0; stroke-width: 1; display: block; }
.fw { fill: #f2f4f8; }
.fb { fill: #7e9cd0; }
.fk { fill: #0d0d10; }
.ft { fill: #b3a07a; }
.n { stroke: none; }
.pt { fill: #e4f7fb; stroke: #7fa5ad; }

.app { display: flex; height: 100vh; min-width: 700px; overflow: hidden; }
.side { flex: 0 0 264px; overflow: hidden; background: #323232; }
.splitter { flex: 0 0 7px; background: linear-gradient(90deg, #d8d8d8, #c4c4c6 60%, #9a9ca0); }
.work { flex: 1; min-width: 0; display: flex; flex-direction: column; background: #f0f1f2; }

/* panel title bars */
.bar { height: 13px; display: flex; align-items: center; justify-content: space-between; padding: 0 2px 0 4px; background: #bbb7ae; border-top: 1px solid #d8d5ce; border-bottom: 1px solid #85827c; }
.close { width: 11px; height: 10px; border: 1px solid #a79591; background: linear-gradient(45deg, transparent 45%, #a8605f 46% 54%, transparent 55%), linear-gradient(-45deg, transparent 45%, #a8605f 46% 54%, #c9bdb6 55%); }

/* main menu */
.menu { display: flex; gap: 7px; height: 14px; line-height: 14px; padding-right: 14px; background: #1c1c1c; }
.menu .current { color: #4b3fc0; }
.end { margin-left: auto; }
.tabs { display: flex; gap: 3px; height: 15px; line-height: 15px; padding: 0 2px 0 3px; background: #1c1c1c; white-space: nowrap; }
.tabs.spread { gap: 0; justify-content: space-between; }
.tabs a { display: flex; align-items: center; gap: 2px; }
.tabs a::before { content: ""; width: 6px; height: 6px; border-radius: 3px; background: radial-gradient(circle at 35% 35%, #fff, var(--dot) 50%); }
.yellow { --dot: #c9c61f; }
.teal { --dot: #159274; }
.violet { --dot: #6a2cc0; }
.red { --dot: #d92c18; }
.crimson { --dot: #cf1d28; }
.indigo { --dot: #5443c4; }
.blue { --dot: #2f66c2; }
.magenta { --dot: #c01f98; }
.orange { --dot: #e8731c; }
.tools { display: grid; grid-template-columns: repeat(11, 1fr); grid-auto-rows: 24px; padding-right: 4px; background: #565656; }
.tools svg { width: 19px; height: 19px; }
.tools.dark { background: #262728; padding-bottom: 4px; }

/* display */
.display { display: flex; height: 41px; padding-bottom: 1px; background: #3b3b3b; }
.view-box { flex: 0 0 136px; border-right: 1px solid #999; }
.mode-box { flex: 0 0 107px; padding-left: 2px; border-right: 1px solid #777; }
.icons { display: flex; align-items: center; justify-content: space-between; height: 25px; padding: 0 4px 0 2px; background: #42423f; }
.mode-box .icons { padding: 0; background: #555; }
.icons button { width: 20px; height: 20px; }
.icons svg { width: 19px; height: 19px; }
.lit { background: #5d8be0; box-shadow: inset 0 0 0 1px #a7c1f2; }
.pale { background: #a3b5e6; }
.boxed { box-shadow: inset 0 0 0 1px #a9a59c; }
.pick { position: relative; display: block; height: 15px; background: #1d1d1d; }
.pick select { appearance: none; width: 100%; height: 15px; padding: 0 2px; border: 1px solid #3a3a3a; background: transparent; color: #b4b4b0; font: 8px "DejaVu Sans", sans-serif; }
.pick::after { content: ""; position: absolute; right: 5px; top: 4px; width: 4px; height: 4px; border: solid #888; border-width: 0 1px 1px 0; transform: rotate(45deg); }
.switch { background: linear-gradient(#101b48, #101b48) center / 2px 7px no-repeat #668ee4; border: 1px solid; border-color: #a9c2f8 #2e4a90 #2e4a90 #a9c2f8; }
.switch.tall { width: 15px; height: 35px; margin: 3px 0 0 3px; }

/* snaps */
.snaps { padding: 2px 4px 4px 2px; height: 54px; background: linear-gradient(#323232 25px, #555 26px); }
.snap-row { display: flex; gap: 3px; }
.snap-row.second { gap: 2px; margin-top: 6px; }
.cell { flex: 0 0 20px; height: 21px; background: #505252; border: 1px solid; border-color: #b6b6b0 #747470 #747470 #b6b6b0; }
.cell svg { width: 18px; height: 18px; }
.cell.on { background: #668ee4; border-color: #9cb8f4; }
.cell.wide { flex: 0 0 45px; margin-left: auto; }
.steps { flex: 1; display: grid; grid-template-columns: 24px 27px 25px 1fr; height: 15px; align-self: center; margin-left: 3px; border: 1px solid #181818; color: #a0a0a0; font-size: 10px; }
.steps button { border-left: 1px solid #7c7c7c; background: #484848; }
.steps .on { background: #526db3; color: #91a6e0; }

/* info and settings */
.info { display: flex; justify-content: space-between; height: 52px; background: #2d2d2d; }
.info-left { display: grid; grid-template-columns: repeat(7, 22px); grid-auto-rows: 26px; padding-left: 3px; }
.info-right { display: grid; grid-template-columns: repeat(4, 1fr); grid-auto-rows: 26px; place-items: center; width: 94px; background: linear-gradient(#575550 50%, #2d2d2d 50%); }
.info-right button { width: 22px; height: 22px; }
.info svg { width: 20px; height: 20px; }
.info .sunk { background: #66635c; border: 1px solid; border-color: #161616 #aaa #aaa #161616; }

/* layers */
.layers { padding: 3px 6px 8px 2px; background: #303030; }
.lights { display: flex; align-items: center; gap: 9px; margin-bottom: 3px; }
.lights .group { flex: 0 0 132px; border: 0; padding: 0; }
.eye { height: 13px; padding: 0 2px; font-size: 9px; gap: 4px; background: #4c4c4c; border: 1px solid; border-color: #999 #666 #666 #999; }
.eye svg { width: 16px; height: 9px; }
.groups { display: grid; grid-template-columns: 124px 124px; column-gap: 8px; row-gap: 5px; }
.group { border-right: 4px solid #6c93e2; padding-right: 1px; }
.layer { display: grid; grid-template-columns: 45px 13px 20px 15px 24px; height: 14px; }
.layer .name { padding-left: 1px; height: 13px; line-height: 12px; white-space: nowrap; border-bottom: 1px solid #121212; }
.layer.active .name { background: #6f97e4; color: #dce8ff; }
.layer button { height: 13px; border: 1px solid; border-color: #8d8d8d #2a2a2a #3c3c3c #767676; background: #505050; }
.layer .swatch { background: var(--ink); border-color: #aaa #333 #444 #aaa; }
.layer svg { width: 9px; height: 10px; }
.layer .switch { border-color: #a9c2f8 #c5ced8 #2e4a90 #c5ced8; background: linear-gradient(#101b48, #101b48) center / 2px 6px no-repeat #668ee4; }
.fold { display: flex; align-items: center; height: 20px; padding: 0 26px 0 30px; }
.fold::before, .fold::after { content: ""; flex: 1; height: 2px; border-top: 1px solid #111; background: #777; }
.fold svg { width: 12px; height: 12px; }
.fold.low { height: 16px; padding: 0 32px; }

/* projects */
.projects { display: flex; height: 104px; background: #4b4b4b; }
.folders { flex: 0 0 85px; border-right: 2px solid #2a2a2a; }
.folder-list { display: flex; height: 83px; overflow: hidden; border-bottom: 1px solid #2f2f2f; }
.folder-list ul { flex: 1; margin: 3px 0 0; padding: 0; list-style: none; font-size: 8px; line-height: 11px; color: #cfcfcf; }
.folder-list li { padding-left: 4px; }
.folder-list .picked { background: #3c62ae; }
.scroll { flex: 0 0 10px; height: 83px; margin-right: 3px; }
.folder-keys { display: flex; gap: 1px; margin-top: 5px; }
.folder-keys button, .card-keys button, .play { border: 1px solid; border-color: #868686 #2b2b2b #2b2b2b #868686; background: #505050; }
.folder-keys button { width: 22px; height: 14px; }
.folder-keys .manager { flex: 1; font-size: 8px; font-weight: bold; }
.projects button svg { width: 10px; height: 10px; }
.gallery { flex: 1; min-width: 0; padding: 5px 0 0 2px; }
.cards { display: flex; gap: 2px; overflow: hidden; }
.card { flex: 0 0 69px; }
.thumb { position: relative; height: 65px; border: 1px solid #777; background: #000; display: flex; align-items: center; }
.thumb b { position: absolute; left: 3px; top: 1px; font-size: 10px; color: #fff; }
.thumb .play { position: absolute; right: 0; top: 0; width: 14px; height: 12px; }
.pic { width: 67px; height: 34px; }
.card-keys { display: grid; grid-template-columns: repeat(3, 1fr); gap: 1px; margin-top: 1px; }
.card-keys button { height: 14px; }
.slide { display: flex; align-items: center; justify-content: space-between; gap: 3px; margin-top: 4px; padding-right: 2px; }
.slide input { appearance: none; flex: 1; min-width: 0; height: 12px; margin: 0; background: linear-gradient(#8c8c8c, #666) center / 100% 3px no-repeat; }
.slide input::-webkit-slider-thumb { appearance: none; width: 10px; height: 9px; background: #5a5a5a; border: 1px solid; border-color: #999 #222 #222 #999; }
.slide button { width: 12px; height: 13px; border: 1px solid #777; }

/* work area */
.topmenu { display: flex; align-items: flex-end; gap: 12px; height: 12px; padding-left: 4px; font: 10px "Noto Sans", sans-serif; color: #1c1c1c; white-space: nowrap; }
.topmenu a { line-height: 14px; margin-bottom: 5px; }
.command { display: flex; align-items: center; height: 17px; margin: 0 0 7px 5px; background: #6490e4; }
.command label { padding: 0 4px 2px 1px; font: bold 11px "Noto Sans", sans-serif; line-height: 15px; color: #0d1e5c; }
.command input { flex: 1; height: 13px; padding: 0; border: 0; border-left: 1px solid #7a80a8; background: transparent; color: #0d1e5c; outline: 0; font: 11px "Noto Sans", sans-serif; }
.viewport { position: relative; flex: 1; min-height: 0; background: #000; overflow: hidden; }
.scene { width: 100%; height: 100%; }
.scene path[fill^="url"], .scene rect[fill^="url"] { stroke: none; }
.viewname { position: absolute; left: 1px; top: 0; height: 15px; padding: 0 1px 0 7px; gap: 6px; background: #9db1c6; color: #1c2b3c; font: 10px "Noto Sans", sans-serif; border-radius: 0 0 3px 0; }
.viewname svg { width: 10px; height: 14px; }
.axis { font-size: 10px; fill: #9a9a9a; stroke: none; }
.axis.x { fill: #8d1a33; }
```

FILE: layers.js
```js
// Fills each group with one row per layer, from "name:colour" pairs.
const arrow = '<svg viewBox="0 0 9 10"><path class="fw n" d="M3 2l4 3-4 3z"/></svg>';
const lock = '<svg viewBox="0 0 9 10"><path d="M3 5V2h3v1" stroke="#b5b5a8"/><path d="M2 5h6v4H2z" fill="#b5b5a8" stroke="none"/></svg>';

document.querySelectorAll('.group').forEach(group => {
  group.innerHTML = group.dataset.layers.split(',').map(entry => {
    const [name, colour] = entry.split(':');
    const active = name === group.dataset.active ? ' active' : '';
    return `<div class="layer${active}">
      <span class="name">${name}</span>
      <button aria-label="${name} menu">${arrow}</button>
      <button class="swatch" style="--ink:${colour}" aria-label="${name} colour"></button>
      <button aria-label="${name} lock">${lock}</button>
      <button class="switch" aria-label="${name} visible"></button>
    </div>`;
  }).join('');
});
```
